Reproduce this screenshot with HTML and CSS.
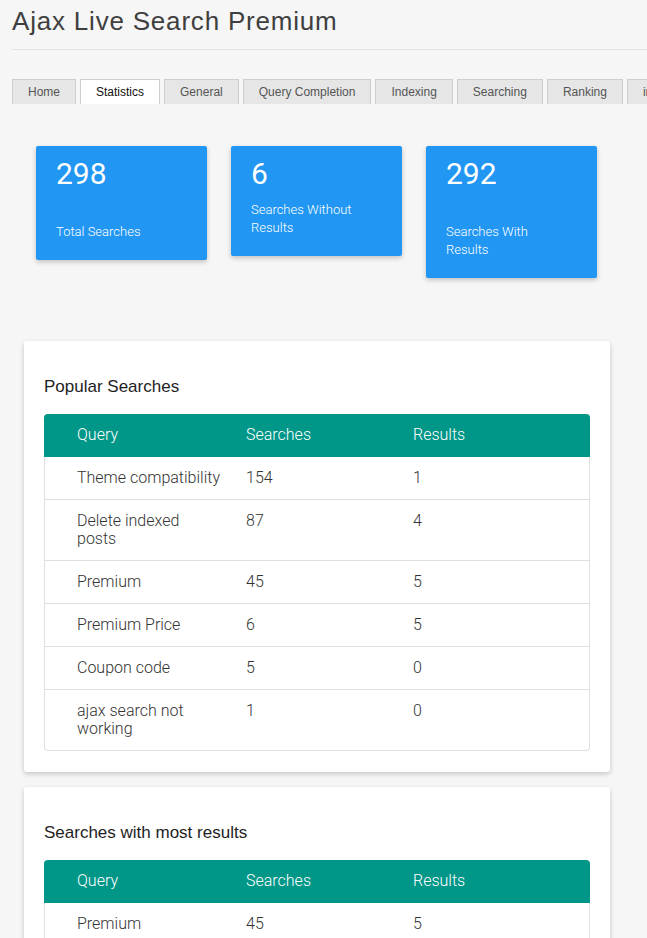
FILE: index.html
```html
<!DOCTYPE html>
<html lang="en">
<head>
<meta charset="utf-8">
<title>Ajax Live Search Premium</title>
<link rel="stylesheet" href="styles.css">
</head>
<body>
<div class="wrap">
  <h1 class="page-title">Ajax Live Search Premium</h1>
  <hr class="title-rule">
  <nav class="tabs">
    <a class="tab">Home</a>
    <a class="tab tab-active">Statistics</a>
    <a class="tab">General</a>
    <a class="tab">Query Completion</a>
    <a class="tab">Indexing</a>
    <a class="tab">Searching</a>
    <a class="tab">Ranking</a>
    <a class="tab">info</a>
  </nav>

  <div class="stats">
    <div class="stat">
      <div class="stat-num">298</div>
      <div class="stat-label">Total Searches</div>
    </div>
    <div class="stat stat-tight">
      <div class="stat-num">6</div>
      <div class="stat-label">Searches Without Results</div>
    </div>
    <div class="stat">
      <div class="stat-num">292</div>
      <div class="stat-label">Searches With Results</div>
    </div>
  </div>

  <section class="card">
    <h2 class="card-title">Popular Searches</h2>
    <div class="table">
      <div class="row head"><span>Query</span><span>Searches</span><span>Results</span></div>
      <div class="row"><span>Theme compatibility</span><span>154</span><span>1</span></div>
      <div class="row"><span>Delete indexed posts</span><span>87</span><span>4</span></div>
      <div class="row"><span>Premium</span><span>45</span><span>5</span></div>
      <div class="row"><span>Premium Price</span><span>6</span><span>5</span></div>
      <div class="row"><span>Coupon code</span><span>5</span><span>0</span></div>
      <div class="row"><span>ajax search not working</span><span>1</span><span>0</span></div>
    </div>
  </section>

  <section class="card">
    <h2 class="card-title">Searches with most results</h2>
    <div class="table">
      <div class="row head"><span>Query</span><span>Searches</span><span>Results</span></div>
      <div class="row"><span>Premium</span><span>45</span><span>5</span></div>
      <div class="row"><span>Premium Price</span><span>6</span><span>5</span></div>
      <div class="row"><span>Delete indexed posts</span><span>87</span><span>4</span></div>
    </div>
  </section>
</div>
</body>
</html>
```
FILE: styles.css
```css
html, body {
  margin: 0;
  padding: 0;
  background: #f6f6f6;
  overflow: hidden;
}

.wrap {
  margin-left: 12px;
  font-family: "Liberation Sans", Arial, sans-serif;
}

.page-title {
  margin: 0;
  padding-top: 4px;
  font-size: 26px;
  letter-spacing: 0.8px;
  line-height: 34px;
  font-weight: 400;
  color: #3f3f3f;
}

.title-rule {
  margin: 11px 0 0;
  border: 0;
  border-top: 1px solid #e3e3e3;
  height: 0;
}

.tabs {
  margin-top: 29px;
  display: flex;
  gap: 4px;
  white-space: nowrap;
}

.tab {
  flex: none;
  height: 24px;
  line-height: 24px;
  padding: 0 15px;
  border: 1px solid #cfcfcf;
  border-bottom: 0;
  background: #e6e6e6;
  color: #555;
  font-size: 12px;
  box-sizing: content-box;
}

.tab-active {
  background: #fff;
  color: #111;
}

.stats {
  margin: 42px 0 63px 24px;
  display: flex;
  gap: 24px;
  align-items: flex-start;
}

.stat {
  width: 121px;
  padding: 10px 30px 20px 20px;
  background: #2196f3;
  color: #fff;
  border-radius: 2px;
  box-shadow: 0 2px 5px rgba(0, 0, 0, 0.22);
  font-family: Roboto, "Liberation Sans", sans-serif;
}

.stat-num {
  font-size: 30px;
  line-height: 35px;
  margin-bottom: 32px;
}

.stat-tight .stat-num {
  margin-bottom: 10px;
}

.stat-label {
  font-size: 13px;
  line-height: 18px;
  font-weight: 300;
}

.stat .stat-label {
  margin-bottom: -1px;
}

.card {
  width: 546px;
  margin: 0 0 15px 12px;
  padding: 36px 20px 21px;
  background: #fff;
  border-radius: 3px;
  box-shadow: 0 2px 5px rgba(0, 0, 0, 0.2);
}

.card-title {
  margin: 0 0 17px;
  font-size: 17px;
  line-height: 20px;
  font-weight: 400;
  color: #1e1e1e;
}

.table {
  border: 1px solid #e0e0e0;
  border-top: 0;
  border-radius: 4px;
  font-family: Roboto, "Liberation Sans", sans-serif;
  font-weight: 300;
  font-size: 16px;
  line-height: 18px;
  color: #333;
}

.row {
  display: grid;
  grid-template-columns: 143px 141px 1fr;
  column-gap: 26px;
  padding: 12px 0 12px 32px;
  border-bottom: 1px solid #e0e0e0;
}

.row:last-child {
  border-bottom: 0;
}

.row.head {
  margin: 0 -1px;
  padding: 12px 0 13px 33px;
  background: #009688;
  color: #fff;
  border-bottom: 0;
  border-radius: 4px 4px 0 0;
}
```
